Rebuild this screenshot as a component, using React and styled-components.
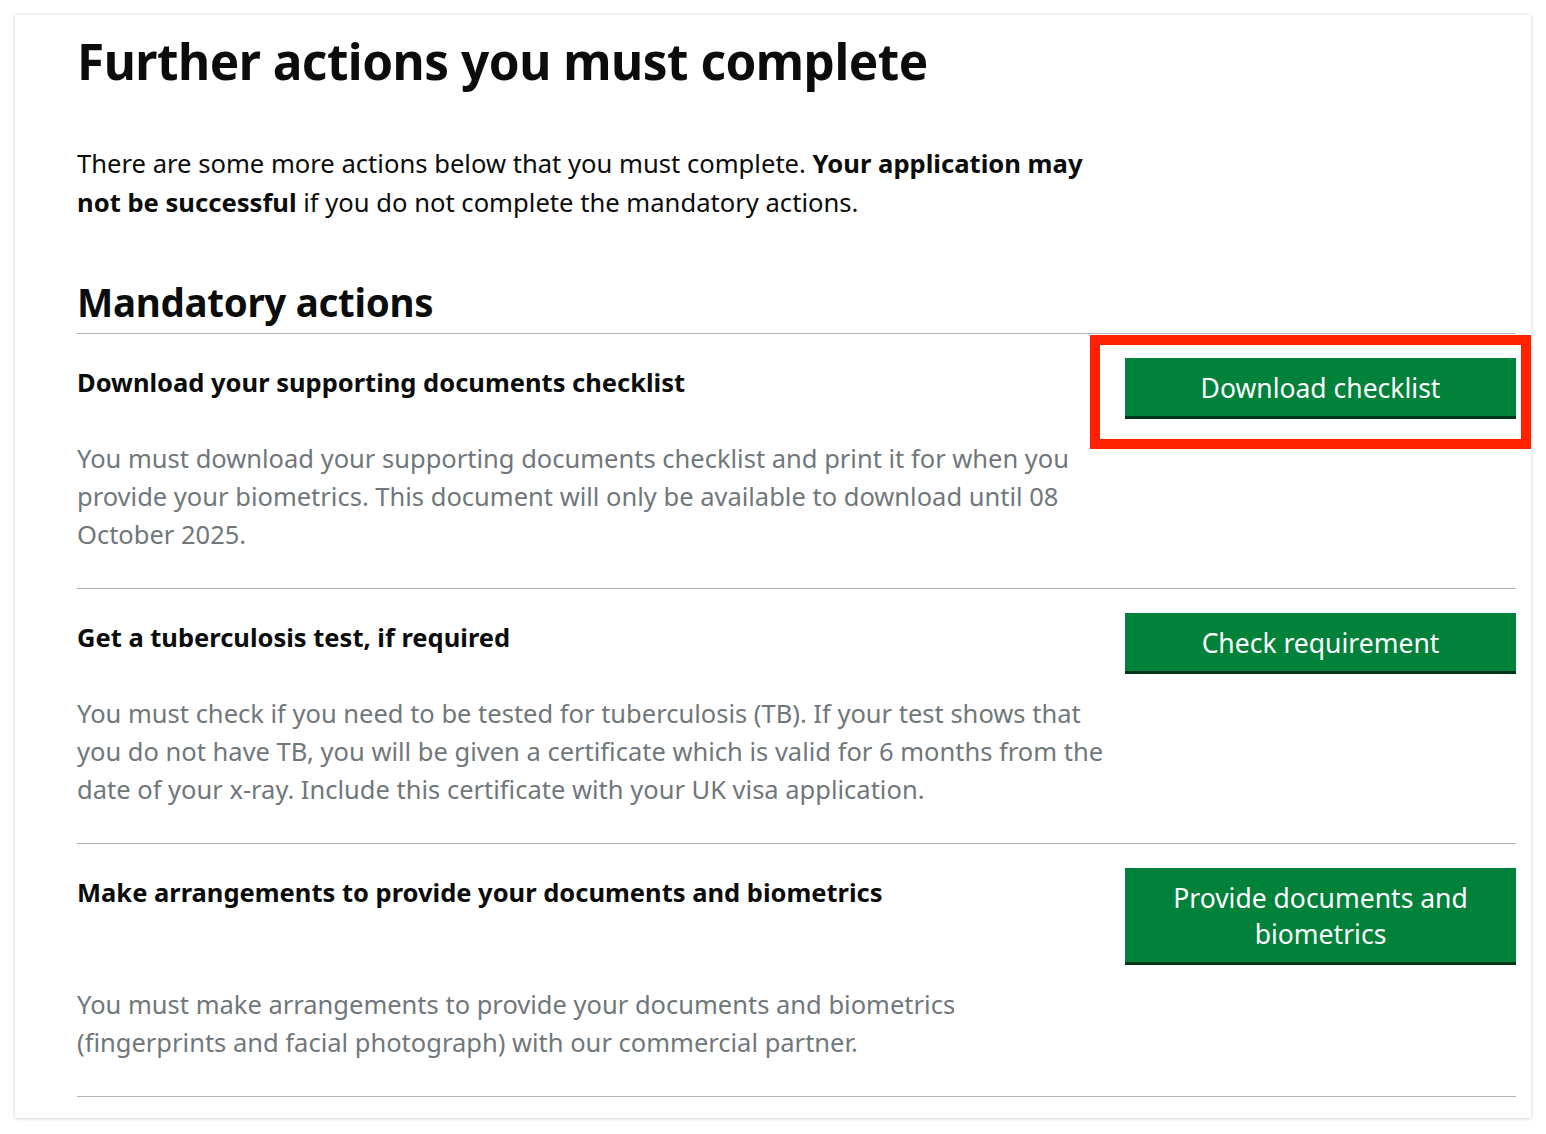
import React from 'react';
import styled, { createGlobalStyle } from 'styled-components';

const GlobalStyle = createGlobalStyle`
  html, body {
    margin: 0;
    padding: 0;
    background: #ffffff;
  }
  body {
    font-family: "Noto Sans", "Liberation Sans", Arial, sans-serif;
    color: #0b0c0c;
    -webkit-font-smoothing: antialiased;
  }
`;

const actions = [
  {
    title: 'Download your supporting documents checklist',
    button: 'Download checklist',
    highlighted: true,
    text:
      'You must download your supporting documents checklist and print it for when you provide your biometrics. This document will only be available to download until 08 October 2025.',
  },
  {
    title: 'Get a tuberculosis test, if required',
    button: 'Check requirement',
    text:
      'You must check if you need to be tested for tuberculosis (TB). If your test shows that you do not have TB, you will be given a certificate which is valid for 6 months from the date of your x-ray. Include this certificate with your UK visa application.',
  },
  {
    title: 'Make arrangements to provide your documents and biometrics',
    button: 'Provide documents and biometrics',
    text:
      'You must make arrangements to provide your documents and biometrics (fingerprints and facial photograph) with our commercial partner.',
  },
];

export default function App() {
  return (
    <>
      <GlobalStyle />
      <Page>
        <Card>
          <Heading>Further actions you must complete</Heading>
          <Lead>
            There are some more actions below that you must complete.{' '}
            <strong>Your application may not be successful</strong> if you do
            not complete the mandatory actions.
          </Lead>
          <SubHeading>Mandatory actions</SubHeading>
          <List>
            {actions.map((a) => (
              <Row key={a.title}>
                <RowHead>
                  <RowTitle>{a.title}</RowTitle>
                  <ButtonWrap>
                    <Button>{a.button}</Button>
                    {a.highlighted && <Highlight />}
                  </ButtonWrap>
                </RowHead>
                <RowText>{a.text}</RowText>
              </Row>
            ))}
          </List>
        </Card>
      </Page>
    </>
  );
}

const Page = styled.div`
  padding: 15px;
  box-sizing: border-box;
  width: 1546px;
`;

const Card = styled.div`
  background: #ffffff;
  box-shadow: 0 0 3px rgba(0, 0, 0, 0.14), 0 1px 4px rgba(0, 0, 0, 0.1);
  padding: 18px 15px 21px 62px;
`;

const Heading = styled.h1`
  margin: 0;
  font-size: 49.5px;
  line-height: 56px;
  font-weight: 700;
  letter-spacing: -0.5px;
`;

const Lead = styled.p`
  margin: 55px 0 0;
  max-width: 1040px;
  font-size: 25.6px;
  line-height: 39px;

  strong {
    font-weight: 700;
  }
`;

const SubHeading = styled.h2`
  margin: 57px 0 0;
  font-size: 38.5px;
  line-height: 46px;
  font-weight: 700;
  letter-spacing: -0.3px;
`;

const List = styled.div`
  margin-top: 8px;
`;

const Row = styled.div`
  border-top: 1px solid #b1b4b6;
  padding: 24px 0 35px;

  &:last-child {
    border-bottom: 1px solid #b1b4b6;
  }
`;

const RowHead = styled.div`
  display: grid;
  grid-template-columns: 1fr 391px;
  column-gap: 15px;
  align-items: start;
`;

const RowTitle = styled.h3`
  margin: 8px 0 0;
  font-size: 25.5px;
  line-height: 32px;
  font-weight: 700;
`;

const ButtonWrap = styled.div`
  position: relative;
`;

const Button = styled.button`
  display: block;
  width: 100%;
  border: 0;
  border-radius: 0;
  background: #00823b;
  box-shadow: 0 3px 0 #003618;
  color: #ffffff;
  font-family: inherit;
  font-size: 26.5px;
  line-height: 36px;
  padding: 12px 30px 10px;
  text-align: center;
  cursor: pointer;
`;

const Highlight = styled.div`
  position: absolute;
  left: -35px;
  top: -23px;
  right: -15px;
  bottom: -33px;
  border: 10px solid #ff2200;
  pointer-events: none;
`;

const RowText = styled.p`
  margin: 23px 0 0;
  max-width: 1030px;
  font-size: 25.5px;
  line-height: 38px;
  color: #6f777b;
`;
